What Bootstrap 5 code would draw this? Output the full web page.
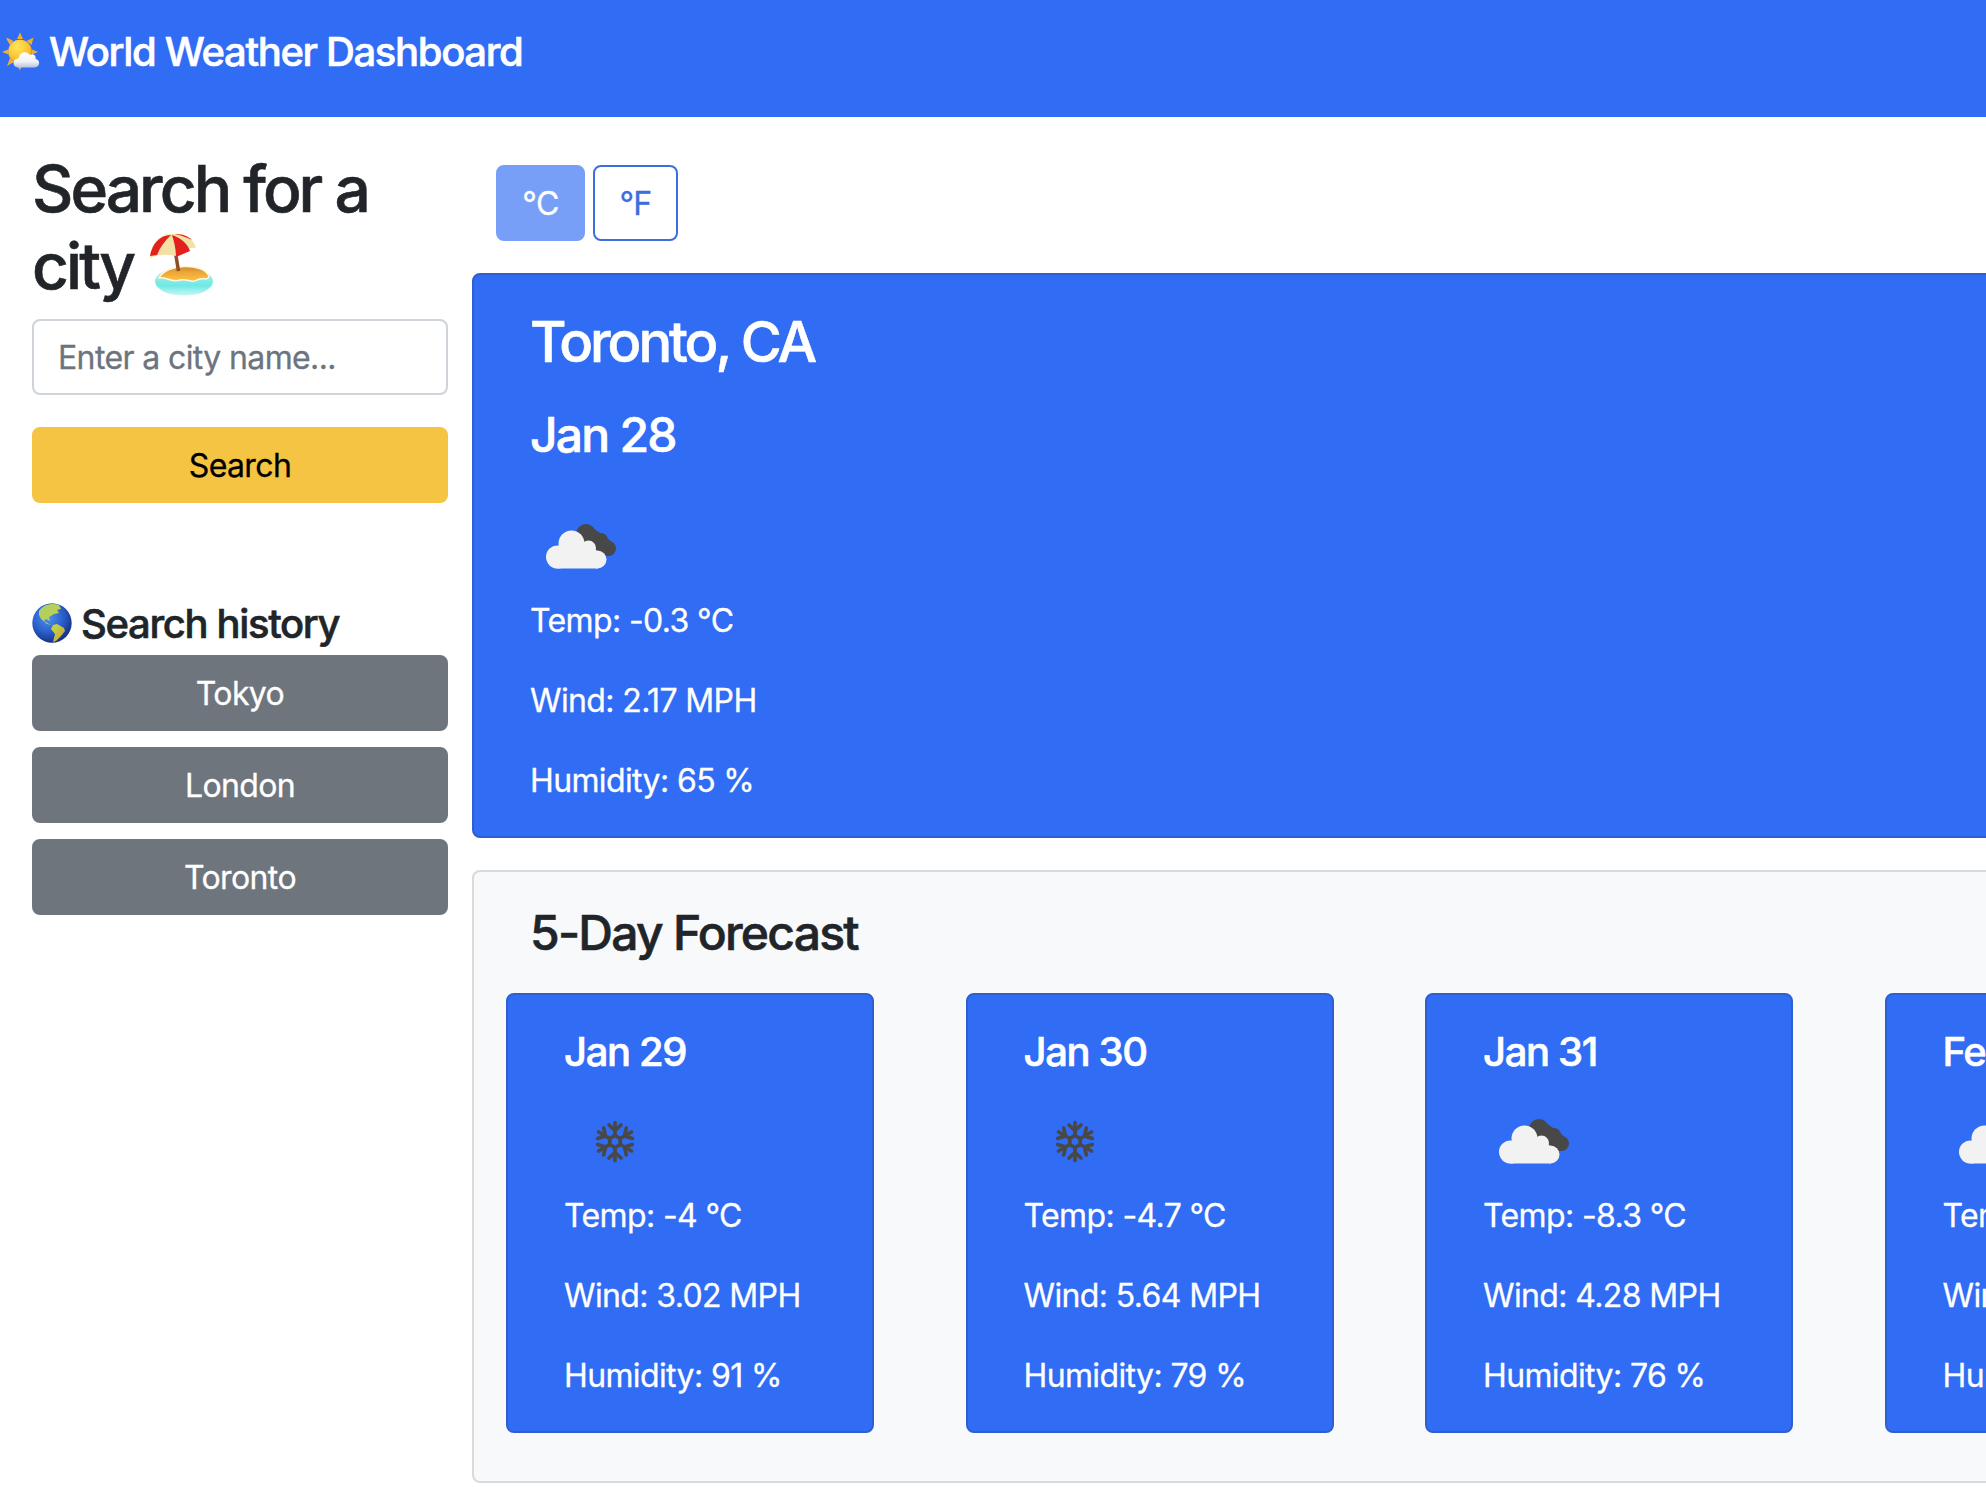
<!DOCTYPE html>
<html lang="en">
<head>
<meta charset="utf-8">
<title>World Weather Dashboard</title>
<link href="https://cdn.jsdelivr.net/npm/bootstrap@5.3.0/dist/css/bootstrap.min.css" rel="stylesheet">
<style>
html{font-size:32px}
body{--bs-border-radius:8px;--bs-border-width:2px;font-family:Inter,"Liberation Sans",sans-serif;letter-spacing:-.62px;-webkit-text-stroke:.3px;overflow:hidden;height:1489px;color:#212529}
h1,h2,h3,h4{font-weight:500;-webkit-text-stroke:.6px}
.app-header{background:#306cf4;height:117px;padding-top:28px}
.glyph{display:inline-block;flex:none}
.app-title{font-size:40px;line-height:48px;letter-spacing:-1.35px}
.header-icon{margin-right:9px}
.side-panel{width:416px;margin-left:32px;padding-top:34px}
.side-title{font-size:64px;line-height:76.8px;letter-spacing:-2.95px;margin-bottom:14px}
.side-title .glyph{margin-left:2px;margin-top:-1px}
.btn,.form-control{border-width:2px;border-radius:8px;height:76px;line-height:48px;padding:13px 24px 11px;letter-spacing:inherit}
.form-control{border-color:#ced4da;margin-bottom:32px}
.form-control::placeholder{color:#6c757d}
.btn-warning{background:#f5c443;border-color:#f5c443;color:#000}
.btn-secondary{background:#6e757c;border-color:#6e757c}
.history-title{margin:97px 0 7px}
.history-title .glyph{margin-right:9px}
.units{gap:8px;margin:0 0 32px 24px}
.btn-unit{border-color:#3d6dde;color:#3d6dde;width:85px}
.btn-unit:disabled{background:#306cf4;border-color:#306cf4;color:#fff;opacity:.65;width:89px}
.main-panel{width:2382px;margin-left:24px;padding-top:48px}
.card{border:2px solid #d9dadc;border-radius:8px}
.weather-card{background:#306cf4;border-color:#2d5fd0;color:#fff}
.weather-card svg{margin-bottom:1px}
.card-pad{padding:32px 56px 29px}
.today{height:565px}
.city{font-size:56px;line-height:67px;letter-spacing:-3px;margin:2px 0 30px}
.date,.forecast-title{font-size:48px;line-height:58px;letter-spacing:-1.75px;margin-bottom:32px}
.forecast{background:#f8f9fb;height:613px;margin-top:32px}
.forecast-title{margin:32px 56px 31px}
.day-card{width:368px;height:440px;flex:none}
.day-card .app-title{margin:1px 0 15px}
.day-gap{gap:91.5px;padding-left:32px}
</style>
</head>
<body>
<svg width="0" height="0" class="position-absolute">
  <defs>
    <radialGradient id="sunFill" cx=".4" cy=".3" r=".75"><stop offset="0" stop-color="#ffe65a"/><stop offset=".6" stop-color="#fbc530"/><stop offset="1" stop-color="#f19a20"/></radialGradient>
    <linearGradient id="puff" x1="0" y1="0" x2="0" y2="1"><stop offset="0" stop-color="#fff"/><stop offset=".6" stop-color="#f1f3f8"/><stop offset="1" stop-color="#b9c3dc"/></linearGradient>
    <radialGradient id="ocean" cx=".4" cy=".35" r=".7"><stop offset="0" stop-color="#4f93ea"/><stop offset=".55" stop-color="#2a5fcd"/><stop offset="1" stop-color="#152a78"/></radialGradient>
    <linearGradient id="land" x1="0" y1="0" x2="1" y2="1"><stop offset="0" stop-color="#a9cf6a"/><stop offset=".6" stop-color="#c5cf4b"/><stop offset="1" stop-color="#cf9d25"/></linearGradient>
    <linearGradient id="sea" x1="0" y1="0" x2="0" y2="1"><stop offset="0" stop-color="#b8f2ea"/><stop offset=".65" stop-color="#6fe8e4"/><stop offset="1" stop-color="#c9f7f6"/></linearGradient>
    <linearGradient id="sand" x1="0" y1="0" x2="0" y2="1"><stop offset="0" stop-color="#c98a2c"/><stop offset=".4" stop-color="#eda63a"/><stop offset="1" stop-color="#fbc53f"/></linearGradient>
    <symbol id="clouds" viewBox="0 0 100 100">
      <g fill="#484848"><circle cx="56" cy="38" r="10"/><circle cx="71" cy="44" r="7"/><circle cx="78.500" cy="52.500" r="7.500"/><path d="M48 38L60 30L76 41L84 48L79 60H70L50 50Z"/></g>
      <g fill="#f2f2f2"><circle cx="27.500" cy="61" r="11.500"/><circle cx="41.500" cy="47.500" r="13"/><circle cx="58.500" cy="52" r="7.500"/><circle cx="67.500" cy="63.500" r="9"/><path d="M27 72.500V55L35 45H50L62 50L68 56V72.500Z"/></g>
    </symbol>
    <symbol id="snow" viewBox="0 0 100 100">
      <g fill="none" stroke="#484848" stroke-width="3.700" stroke-linecap="round">
        <path d="M51 44.500L56.200 47.500V53.500L51 56.500L45.800 53.500V47.500Z"/>
        <path id="arm" d="M51 44V31.500M45 34L51 39.500L57 34"/>
        <use href="#arm" transform="rotate(60 51 50.500)"/><use href="#arm" transform="rotate(120 51 50.500)"/><use href="#arm" transform="rotate(180 51 50.500)"/><use href="#arm" transform="rotate(240 51 50.500)"/><use href="#arm" transform="rotate(300 51 50.500)"/>
      </g>
    </symbol>
  </defs>
</svg>

<header class="app-header text-white">
  <h1 class="app-title d-flex m-0"><svg class="glyph header-icon" width="40" height="48" viewBox="0 0 40 48">
    <g fill="#f3ad2c"><path d="M17 11L20 4.500L23 11ZM7 12L6.500 9.500L13.500 13L10 17ZM33.500 9.500L31.500 17L26.500 13ZM8 21.500L2 24L8.500 26.500ZM32 21.500L38 24L32 26.500ZM10 30L7 38L14 34ZM17 37L20 42.500L22 37Z"/></g>
    <circle cx="20" cy="23.500" r="11.800" fill="url(#sunFill)"/>
    <path d="M19 39.500C11.500 39.500 12 30.500 18.500 30.500C19 24 26.500 22 30 27C33.500 25 36.500 28 35.500 31C41 32 40 39.500 34.500 39.500Z" fill="url(#puff)"/></svg><span>World Weather Dashboard</span></h1>
</header>

<div class="d-flex align-items-start">
  <aside class="side-panel flex-shrink-0">
    <h2 class="side-title">Search for a<br>city <svg class="glyph align-top" width="66" height="76" viewBox="0 0 66 76">
      <ellipse cx="35" cy="54.500" rx="29" ry="14" fill="url(#sea)"/>
      <path d="M10 51C16 37 54 35 60 49C60 54 53 50 48 53C43 57 38 51 31 53C22 56 16 49 10 51Z" fill="url(#sand)" stroke="#fff8df" stroke-width="1.500"/>
      <path d="M25 17L29.500 44" stroke="#8d4f26" stroke-width="3.500"/>
      <path d="M1 28C3 14 13 6 24 7C35 5 45 12 47 21C41 20 35 23 27 29C19 27 10 27 1 31Z" fill="#f4e0a4"/>
      <path d="M1 29C3 17 11 8 22 8C16 14 11 20 8 28ZM23 8C32 11 39 17 41 24L27 30C27 22 25 14 23 8ZM26 7C33 7 39 9 43 13C37 10 31 8 26 7Z" fill="#e3211c"/></svg></h2>
    <input class="form-control" placeholder="Enter a city name..." aria-label="City">
    <button class="btn btn-warning w-100">Search</button>
    <h3 class="app-title d-flex history-title"><svg class="glyph" width="40" height="48" viewBox="0 0 40 48">
      <circle cx="20" cy="23" r="19.700" fill="url(#ocean)"/>
      <path d="M7 11C12 4 20 3 27 5L29 9L25 10L27 13L22 14L17 17L18 21L14 19L12 21L17 24L20 25L15 24L9 19L7 15ZM21 25L25 24L32 28L33 31L29 36L24 41L21 42L23 34L19 29Z" fill="url(#land)"/></svg><span>Search history</span></h3>
    <div class="d-grid gap-2">
      <button class="btn btn-secondary">Tokyo</button>
      <button class="btn btn-secondary">London</button>
      <button class="btn btn-secondary">Toronto</button>
    </div>
  </aside>

  <main class="main-panel flex-shrink-0">
    <div class="d-flex units">
      <button class="btn btn-unit" disabled>°C</button>
      <button class="btn btn-unit">°F</button>
    </div>
    <section class="card weather-card today card-pad">
      <h2 class="city">Toronto, CA</h2>
      <h3 class="date">Jan 28</h3>
      <svg width="100" height="100"><use href="#clouds"/></svg>
      <p>Temp: -0.3 °C</p><p>Wind: 2.17 MPH</p><p class="mb-0">Humidity: 65 %</p>
    </section>
    <section class="card forecast">
      <h3 class="forecast-title">5-Day Forecast</h3>
      <div class="d-flex day-gap">
        <article class="card weather-card day-card card-pad"><h4 class="app-title">Jan 29</h4><svg width="100" height="100"><use href="#snow"/></svg><p>Temp: -4 °C</p><p>Wind: 3.02 MPH</p><p class="mb-0">Humidity: 91 %</p></article>
        <article class="card weather-card day-card card-pad"><h4 class="app-title">Jan 30</h4><svg width="100" height="100"><use href="#snow"/></svg><p>Temp: -4.7 °C</p><p>Wind: 5.64 MPH</p><p class="mb-0">Humidity: 79 %</p></article>
        <article class="card weather-card day-card card-pad"><h4 class="app-title">Jan 31</h4><svg width="100" height="100"><use href="#clouds"/></svg><p>Temp: -8.3 °C</p><p>Wind: 4.28 MPH</p><p class="mb-0">Humidity: 76 %</p></article>
        <article class="card weather-card day-card card-pad"><h4 class="app-title">Feb 1</h4><svg width="100" height="100"><use href="#clouds"/></svg><p>Temp: -8 °C</p><p>Wind: 4 MPH</p><p class="mb-0">Humidity: 70 %</p></article>
      </div>
    </section>
  </main>
</div>
<script src="https://cdn.jsdelivr.net/npm/bootstrap@5.3.0/dist/js/bootstrap.bundle.min.js"></script>
</body>
</html>
